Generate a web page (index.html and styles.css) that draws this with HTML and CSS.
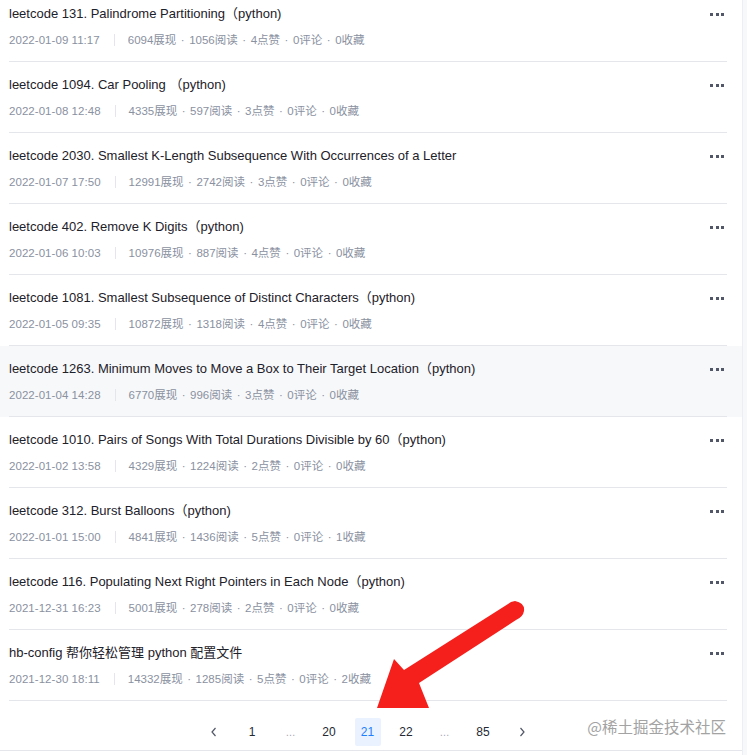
FILE: index.html
```html
<!DOCTYPE html>
<html lang="zh-CN">
<head>
<meta charset="utf-8">
<link rel="stylesheet" href="styles.css">
</head>
<body>
<div class="page">
  <main class="main">
    <ul class="list">
      <li class="item"><div class="inner"><div class="info"><div class="title">leetcode 131. Palindrome Partitioning（python)</div><div class="meta"><span class="date">2022-01-09 11:17</span><span class="sep"></span><span class="stats">6094展现<b>·</b>1056阅读<b>·</b>4点赞<b>·</b>0评论<b>·</b>0收藏</span></div></div><div class="more"><i></i><i></i><i></i></div></div></li>
      <li class="item"><div class="inner"><div class="info"><div class="title">leetcode 1094. Car Pooling （python)</div><div class="meta"><span class="date">2022-01-08 12:48</span><span class="sep"></span><span class="stats">4335展现<b>·</b>597阅读<b>·</b>3点赞<b>·</b>0评论<b>·</b>0收藏</span></div></div><div class="more"><i></i><i></i><i></i></div></div></li>
      <li class="item"><div class="inner"><div class="info"><div class="title">leetcode 2030. Smallest K-Length Subsequence With Occurrences of a Letter</div><div class="meta"><span class="date">2022-01-07 17:50</span><span class="sep"></span><span class="stats">12991展现<b>·</b>2742阅读<b>·</b>3点赞<b>·</b>0评论<b>·</b>0收藏</span></div></div><div class="more"><i></i><i></i><i></i></div></div></li>
      <li class="item"><div class="inner"><div class="info"><div class="title">leetcode 402. Remove K Digits（python)</div><div class="meta"><span class="date">2022-01-06 10:03</span><span class="sep"></span><span class="stats">10976展现<b>·</b>887阅读<b>·</b>4点赞<b>·</b>0评论<b>·</b>0收藏</span></div></div><div class="more"><i></i><i></i><i></i></div></div></li>
      <li class="item"><div class="inner"><div class="info"><div class="title">leetcode 1081. Smallest Subsequence of Distinct Characters（python)</div><div class="meta"><span class="date">2022-01-05 09:35</span><span class="sep"></span><span class="stats">10872展现<b>·</b>1318阅读<b>·</b>4点赞<b>·</b>0评论<b>·</b>0收藏</span></div></div><div class="more"><i></i><i></i><i></i></div></div></li>
      <li class="item hover"><div class="inner"><div class="info"><div class="title">leetcode 1263. Minimum Moves to Move a Box to Their Target Location（python)</div><div class="meta"><span class="date">2022-01-04 14:28</span><span class="sep"></span><span class="stats">6770展现<b>·</b>996阅读<b>·</b>3点赞<b>·</b>0评论<b>·</b>0收藏</span></div></div><div class="more"><i></i><i></i><i></i></div></div></li>
      <li class="item"><div class="inner"><div class="info"><div class="title">leetcode 1010. Pairs of Songs With Total Durations Divisible by 60（python)</div><div class="meta"><span class="date">2022-01-02 13:58</span><span class="sep"></span><span class="stats">4329展现<b>·</b>1224阅读<b>·</b>2点赞<b>·</b>0评论<b>·</b>0收藏</span></div></div><div class="more"><i></i><i></i><i></i></div></div></li>
      <li class="item"><div class="inner"><div class="info"><div class="title">leetcode 312. Burst Balloons（python)</div><div class="meta"><span class="date">2022-01-01 15:00</span><span class="sep"></span><span class="stats">4841展现<b>·</b>1436阅读<b>·</b>5点赞<b>·</b>0评论<b>·</b>1收藏</span></div></div><div class="more"><i></i><i></i><i></i></div></div></li>
      <li class="item"><div class="inner"><div class="info"><div class="title">leetcode 116. Populating Next Right Pointers in Each Node（python)</div><div class="meta"><span class="date">2021-12-31 16:23</span><span class="sep"></span><span class="stats">5001展现<b>·</b>278阅读<b>·</b>2点赞<b>·</b>0评论<b>·</b>0收藏</span></div></div><div class="more"><i></i><i></i><i></i></div></div></li>
      <li class="item"><div class="inner"><div class="info"><div class="title">hb-config 帮你轻松管理 python 配置文件</div><div class="meta"><span class="date">2021-12-30 18:11</span><span class="sep"></span><span class="stats">14332展现<b>·</b>1285阅读<b>·</b>5点赞<b>·</b>0评论<b>·</b>2收藏</span></div></div><div class="more"><i></i><i></i><i></i></div></div></li>
    </ul>
    <nav class="pager">
      <span class="pg arrow"><svg width="8" height="10" viewBox="0 0 8 10"><path d="M5.5 1 L2 5 L5.5 9" fill="none" stroke="#515767" stroke-width="1.2"/></svg></span>
      <span class="pg">1</span>
      <span class="pg dots">…</span>
      <span class="pg">20</span>
      <span class="pg active">21</span>
      <span class="pg">22</span>
      <span class="pg dots">…</span>
      <span class="pg">85</span>
      <span class="pg arrow"><svg width="8" height="10" viewBox="0 0 8 10"><path d="M2.5 1 L6 5 L2.5 9" fill="none" stroke="#515767" stroke-width="1.2"/></svg></span>
    </nav>
    <div class="watermark">@稀土掘金技术社区</div>
    <svg class="red-arrow" width="747" height="755" viewBox="0 0 747 755">
      <path d="M515 601 Q525 603 524 611 Q523 617 516 620 L419 683 L429 708 L377 708 L394 659 L404 670 L511 602 Z" fill="#f5201c"/>
    </svg>
  </main>
  <div class="side"></div>
</div>
</body>
</html>
```

FILE: styles.css
```css
* { box-sizing: border-box; }
html, body { margin: 0; padding: 0; background: #fff; }
body {
  font-family: "Liberation Sans", "Noto Sans CJK SC", sans-serif;
  color: #252933;
  overflow: hidden;
}
.page {
  display: flex;
  width: 747px;
  height: 755px;
  overflow: hidden;
}
.main {
  position: relative;
  width: 742px;
  flex: none;
  background: #fff;
}
.side {
  flex: 1;
  background: #f7f8fa;
  border-left: 1px solid #eceef2;
}
.list {
  list-style: none;
  margin: -9px 0 0 0;
  padding: 0;
}
.item {
  padding: 0 15px 0 9px;
}
.item.hover { background: #f7f8fa; }
.inner {
  display: flex;
  align-items: flex-start;
  justify-content: space-between;
  padding: 13px 0 11px;
  border-bottom: 1px solid #e4e6eb;
  height: 71px;
}
.title {
  font-size: 13px;
  line-height: 20px;
  color: #1d2129;
  white-space: nowrap;
}
.meta {
  margin-top: 6px;
  display: flex;
  align-items: center;
  font-size: 11.5px;
  line-height: 20px;
  color: #8a919f;
  white-space: nowrap;
}
.date { letter-spacing: 0.05px; }
.stats b {
  font-weight: normal;
  margin: 0 4.5px;
}
.sep {
  width: 1px;
  height: 12px;
  background: #e4e6eb;
  margin: 0 13px 0 14px;
}
.more {
  display: flex;
  gap: 2.5px;
  padding-top: 9px;
  margin-right: 3px;
}
.more i {
  display: block;
  width: 3px;
  height: 3px;
  background: #515767;
}
.pager {
  display: flex;
  justify-content: center;
  gap: 12.5px;
  padding: 17px 7px 4px 0;
  border-bottom: 1px solid #e4e6eb;
}
.pg {
  width: 26px;
  height: 28px;
  display: flex;
  align-items: center;
  justify-content: center;
  font-size: 12px;
  color: #252933;
  border-radius: 2px;
}
.pg.dots { color: #a0a5af; font-size: 10px; }
.pg.active { background: #eaf2ff; color: #1e80ff; }
.watermark {
  position: absolute;
  right: 16px;
  bottom: 19px;
  font-family: "Noto Sans CJK SC", sans-serif;
  font-size: 15.5px;
  line-height: 20px;
  color: #a3a3a3;
}
.red-arrow {
  position: absolute;
  left: 0;
  top: 0;
  pointer-events: none;
}
```
